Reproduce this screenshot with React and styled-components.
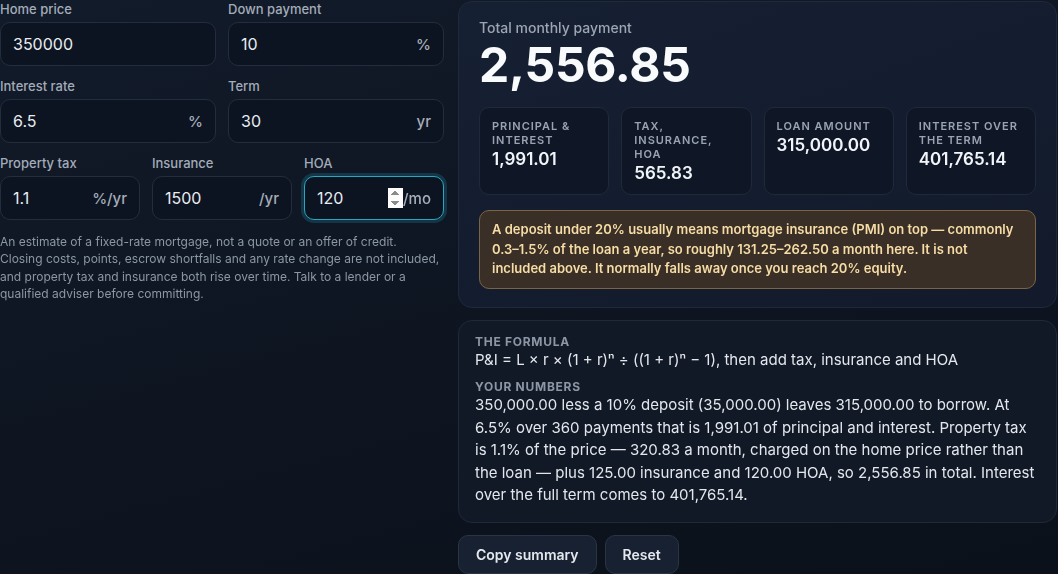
import React from "react";
import styled, { createGlobalStyle, css } from "styled-components";

const Global = createGlobalStyle`
  html, body { margin: 0; padding: 0; }
  body {
    min-height: 100vh;
    background: linear-gradient(165deg, #121b2a 0%, #0e1521 55%, #0b111a 100%);
    font-family: Inter, "Noto Sans", sans-serif;
    color: #e5e9ef;
    overflow: hidden;
  }
  * { box-sizing: border-box; }
`;

const Page = styled.div`
  display: grid;
  grid-template-columns: 444px 599px;
  column-gap: 14px;
  align-items: start;
`;

const Left = styled.div`
  display: flex;
  flex-direction: column;
  gap: 11px;
  min-width: 0;
`;

const FieldRow = styled.div`
  display: grid;
  grid-template-columns: repeat(${(p) => p.$cols}, minmax(0, 1fr));
  column-gap: 12px;
`;

const Field = styled.label`
  display: flex;
  flex-direction: column;
  gap: 4px;
  min-width: 0;
`;

const Label = styled.span`
  font-size: 13px;
  line-height: 18px;
  font-weight: 500;
  color: #a3acb9;
`;

const InputBox = styled.div`
  display: flex;
  align-items: center;
  height: 44px;
  padding: 0 12px;
  border: 1px solid #232d3d;
  border-radius: 10px;
  background: #0d1421;
  &:focus-within {
    border-color: #2aa7bd;
    box-shadow: 0 0 0 3px rgba(34, 170, 200, 0.22);
  }
`;

const Input = styled.input`
  flex: 1;
  width: 100%;
  min-width: 0;
  border: none;
  outline: none;
  background: transparent;
  padding: 0;
  font-family: Inter, sans-serif;
  font-size: 16px;
  color: #e8ecf1;
  -moz-appearance: textfield;
  ${(p) =>
    !p.$spin &&
    css`
      &::-webkit-inner-spin-button,
      &::-webkit-outer-spin-button {
        -webkit-appearance: none;
        margin: 0;
      }
    `}
`;

const Suffix = styled.span`
  flex: none;
  font-size: 15px;
  font-weight: 500;
  color: #a6aebb;
`;

const Disclaimer = styled.p`
  margin: 2px 0 0;
  font-size: 12px;
  line-height: 17.4px;
  color: #8c96a4;
`;

const Right = styled.div`
  display: flex;
  flex-direction: column;
  gap: 12px;
  padding-top: 1px;
  min-width: 0;
`;

const Panel = styled.section`
  border: 1px solid #1f2939;
  border-radius: 14px;
  background: ${(p) =>
    p.$hero
      ? "linear-gradient(160deg, #162033 0%, #121a2b 100%)"
      : "#111927"};
  padding: ${(p) => (p.$hero ? "16px 20px 18px" : "13px 16px 15px")};
`;

const HeroLabel = styled.div`
  font-size: 14px;
  line-height: 20px;
  font-weight: 500;
  color: #9ca5b3;
`;

const BigNumber = styled.div`
  font-size: 48px;
  line-height: 53px;
  font-weight: 700;
  letter-spacing: -0.005em;
  color: #f8fafc;
`;

const Stats = styled.div`
  display: grid;
  grid-template-columns: repeat(4, minmax(0, 1fr));
  gap: 12px;
  margin-top: 16px;
`;

const Stat = styled.div`
  border: 1px solid #1f2939;
  border-radius: 10px;
  background: #0f1726;
  padding: 11px 12px 10px;
`;

const StatLabel = styled.div`
  font-size: 11px;
  line-height: 14px;
  font-weight: 600;
  letter-spacing: 0.09em;
  text-transform: uppercase;
  color: #9aa3b1;
`;

const StatValue = styled.div`
  margin-top: 2px;
  font-size: 17px;
  line-height: 21px;
  font-weight: 600;
  color: #f1f4f8;
`;

const Warning = styled.div`
  margin-top: 15px;
  border: 1px solid #7a6441;
  border-radius: 10px;
  background: #3a2f27;
  padding: 9px 12px 9px;
  font-size: 13px;
  line-height: 19.5px;
  font-weight: 600;
  color: #f6dca5;
`;

const SectionLabel = styled.div`
  font-size: 12px;
  line-height: 15px;
  font-weight: 700;
  letter-spacing: 0.06em;
  text-transform: uppercase;
  color: #8c96a4;
  margin-top: ${(p) => (p.$first ? "0" : "8px")};
`;

const BodyText = styled.div`
  font-size: 15px;
  line-height: 22.6px;
  color: #e3e7ed;
`;

const Actions = styled.div`
  display: flex;
  gap: 8px;
`;

const Button = styled.button`
  height: 39px;
  padding: 0 17px;
  border: 1px solid #2a3444;
  border-radius: 10px;
  background: #182131;
  font-family: Inter, sans-serif;
  font-size: 14px;
  font-weight: 600;
  color: #e5e9ef;
  cursor: pointer;
`;

const fields = [
  [
    { label: "Home price", value: "350000" },
    { label: "Down payment", value: "10", suffix: "%" },
  ],
  [
    { label: "Interest rate", value: "6.5", suffix: "%" },
    { label: "Term", value: "30", suffix: "yr" },
  ],
  [
    { label: "Property tax", value: "1.1", suffix: "%/yr" },
    { label: "Insurance", value: "1500", suffix: "/yr" },
    { label: "HOA", value: "120", suffix: "/mo", focus: true },
  ],
];

const stats = [
  { label: "Principal & interest", value: "1,991.01" },
  { label: "Tax, insurance, HOA", value: "565.83" },
  { label: "Loan amount", value: "315,000.00" },
  { label: "Interest over the term", value: "401,765.14" },
];

export default function App() {
  return (
    <>
      <Global />
      <Page>
        <Left>
          {fields.map((row, i) => (
            <FieldRow key={i} $cols={row.length}>
              {row.map((f) => (
                <Field key={f.label}>
                  <Label>{f.label}</Label>
                  <InputBox>
                    <Input
                      type="number"
                      defaultValue={f.value}
                      autoFocus={f.focus}
                      $spin={f.focus}
                    />
                    {f.suffix && <Suffix>{f.suffix}</Suffix>}
                  </InputBox>
                </Field>
              ))}
            </FieldRow>
          ))}
          <Disclaimer>
            An estimate of a fixed-rate mortgage, not a quote or an offer of credit.
            <br />
            Closing costs, points, escrow shortfalls and any rate change are not
            included, and property tax and insurance both rise over time. Talk to a
            lender or a qualified adviser before committing.
          </Disclaimer>
        </Left>
        <Right>
          <Panel $hero>
            <HeroLabel>Total monthly payment</HeroLabel>
            <BigNumber>2,556.85</BigNumber>
            <Stats>
              {stats.map((s) => (
                <Stat key={s.label}>
                  <StatLabel>{s.label}</StatLabel>
                  <StatValue>{s.value}</StatValue>
                </Stat>
              ))}
            </Stats>
            <Warning>
              A deposit under 20% usually means mortgage insurance (PMI) on top — commonly
              0.3–1.5% of the loan a year, so roughly 131.25–262.50 a month here. It is
              not included above. It normally falls away once you reach 20% equity.
            </Warning>
          </Panel>
          <Panel>
            <SectionLabel $first>The formula</SectionLabel>
            <BodyText>
              P&amp;I = L × r × (1 + r)ⁿ ÷ ((1 + r)ⁿ − 1), then add tax, insurance and HOA
            </BodyText>
            <SectionLabel>Your numbers</SectionLabel>
            <BodyText>
              350,000.00 less a 10% deposit (35,000.00) leaves 315,000.00 to borrow. At
              6.5% over 360 payments that is 1,991.01 of principal and interest. Property
              tax is 1.1% of the price — 320.83 a month, charged on the home price rather
              than the loan — plus 125.00 insurance and 120.00 HOA, so 2,556.85 in total.
              Interest over the full term comes to 401,765.14.
            </BodyText>
          </Panel>
          <Actions>
            <Button>Copy summary</Button>
            <Button>Reset</Button>
          </Actions>
        </Right>
      </Page>
    </>
  );
}
